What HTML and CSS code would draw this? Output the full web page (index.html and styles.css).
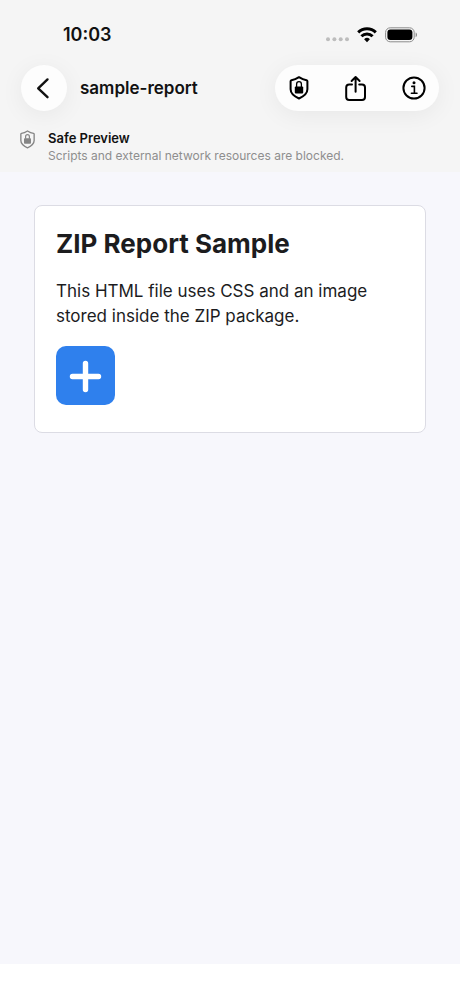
FILE: index.html
```html
<!DOCTYPE html>
<html lang="en">
<head>
  <meta charset="UTF-8" />
  <meta name="viewport" content="width=device-width, initial-scale=1" />
  <title>sample-report</title>
  <link rel="stylesheet" href="styles.css">
</head>
<body>

  <header class="top">
    <div class="status-bar">
      <span class="time">10:03</span>
      <div class="status-icons">
        <svg class="dots" width="24" height="6" viewBox="0 0 24 6" fill="#bdbdbd">
          <circle cx="3" cy="2.2" r="2" /><circle cx="9.4" cy="2.2" r="2" /><circle cx="15.7" cy="2.2" r="2" /><circle cx="22" cy="2.2" r="2" />
        </svg>
        <svg width="20" height="16" viewBox="0 0 20 16" fill="none" stroke="#000" stroke-width="3">
          <path d="M1.2 5.4a12.6 12.6 0 0 1 17.6 0" />
          <path d="M4.4 9.2a8 8 0 0 1 11.2 0" />
          <path d="M10 15.2l-2.9-2.9a4.1 4.1 0 0 1 5.8 0z" fill="#000" stroke="none" />
        </svg>
        <svg width="33" height="16" viewBox="0 0 33 16">
          <rect x="0.6" y="0.8" width="28.6" height="14" rx="4.6" fill="none" stroke="#8c8c8c" />
          <rect x="2.4" y="2.6" width="25" height="10.4" rx="3" />
          <path d="M30.6 5.6v4.6c1.9-.7 1.9-3.9 0-4.6z" fill="#8c8c8c" />
        </svg>
      </div>
    </div>

    <nav class="toolbar">
      <button class="back" aria-label="Back">
        <svg width="24" height="24" viewBox="0 0 24 24" fill="none" stroke="#111" stroke-width="2.4" stroke-linecap="round" stroke-linejoin="round">
          <path d="M15.5 3.4L6.2 12.4l9.3 8.8" />
        </svg>
      </button>
      <span class="doc-name">sample-report</span>
      <div class="actions">
        <button aria-label="Safe preview">
          <svg width="24" height="26" viewBox="0 0 24 26">
            <path d="M12 2.2c2.500 1.600 5 2.700 7.600 3.100.5.1.8.4.8.9v8.100c0 4.400-4.200 7.300-8.400 9.200-4.200-1.900-8.400-4.800-8.400-9.200V6.200c0-.5.3-.8.8-.9C7 4.900 9.500 3.800 12 2.200z" fill="none" stroke="#000" stroke-width="2" stroke-linejoin="round" />
            <rect x="7.800" y="11.400" width="8.400" height="7" rx="1" />
            <path d="M9.600 12V9.300a2.400 2.600 0 0 1 4.800 0V12" fill="none" stroke="#000" stroke-width="1.300" />
          </svg>
        </button>
        <button aria-label="Share">
          <svg width="24" height="28" viewBox="0 0 24 28" fill="none" stroke="#000" stroke-width="2" stroke-linecap="round" stroke-linejoin="round">
            <path d="M8 10.400H5.200a3 3 0 0 0-3 3v9.600a3 3 0 0 0 3 3h12.800a3 3 0 0 0 3-3v-9.600a3 3 0 0 0-3-3H15.200" />
            <path d="M11.600 17.800V3M7.600 7l4-4 4 4" />
          </svg>
        </button>
        <button aria-label="Info">
          <svg width="26" height="26" viewBox="0 0 26 26" fill="none" stroke="#000" stroke-width="2">
            <circle cx="13" cy="13" r="10.600" />
            <circle cx="13" cy="7.800" r="1.500" fill="#000" stroke="none" />
            <path d="M10.800 11.400h2.600v6.600M10.400 18.200h5.600" stroke-width="1.600" stroke-linecap="round" />
          </svg>
        </button>
      </div>
    </nav>

    <div class="banner">
      <svg width="19" height="21" viewBox="0 0 24 26" fill="#858585">
        <path d="M12 2.200c2.500 1.600 5 2.700 7.600 3.100.5.1.8.4.8.9v8.100c0 4.400-4.200 7.300-8.400 9.200-4.200-1.900-8.400-4.800-8.400-9.200V6.200c0-.5.3-.8.8-.9C7 4.900 9.500 3.800 12 2.200z" fill="none" stroke="#858585" stroke-width="1.700" stroke-linejoin="round" />
        <rect x="7.600" y="11.400" width="8.800" height="7" rx="1" />
        <path d="M9.600 12V9.500a2.400 2.600 0 0 1 4.800 0V12" fill="none" stroke="#858585" stroke-width="1.500" />
      </svg>
      <div>
        <div class="banner-title">Safe Preview</div>
        <div class="banner-text">Scripts and external network resources are blocked.</div>
      </div>
    </div>
  </header>

  <main>
    <section class="card">
      <h1>ZIP Report Sample</h1>
      <p>This HTML file uses CSS and an image stored inside the ZIP package.</p>
      <svg class="picture" viewBox="0 0 59 59" role="img" aria-label="Plus">
        <rect width="59" height="59" rx="10" fill="#2f80ed" />
        <path d="M16.500 30.500h26M29.500 17.500v26" stroke="#fff" stroke-width="5.400" stroke-linecap="round" />
      </svg>
    </section>
  </main>

  <footer></footer>

</body>
</html>
```
FILE: styles.css
```css
* {
  box-sizing: border-box;
}
body {
  margin: 0;
  min-height: 100vh;
  display: flex;
  flex-direction: column;
  font-family: Inter, sans-serif;
  background-color: #fff;
  color: #1c1c1e;
}
.top {
  background-color: #f5f5f5;
  color: #111;
  padding-bottom: 8px;
}
.status-bar {
  display: flex;
  justify-content: space-between;
  align-items: center;
  height: 65px;
  padding: 4px 42px 0 63px;
}
.time {
  font-size: 18px;
  font-weight: 600;
}
.status-icons {
  display: flex;
  align-items: center;
  gap: 8px;
}
.dots {
  margin-top: 10px;
}
.toolbar {
  display: flex;
  align-items: center;
  padding: 0 21px;
}
button {
  display: flex;
  align-items: center;
  justify-content: center;
  border: 0;
  padding: 0;
  background: none;
}
.back {
  width: 46px;
  height: 46px;
  border-radius: 50%;
  background-color: #fdfdfd;
  box-shadow: 0 4px 24px rgba(0, 0, 0, 0.06);
}
.doc-name {
  margin-left: 13px;
  font-size: 17px;
  font-weight: 600;
}
.actions {
  display: flex;
  align-items: center;
  justify-content: space-between;
  width: 164px;
  height: 46px;
  margin-left: auto;
  padding: 0 12px;
  border-radius: 23px;
  background-color: #fdfdfd;
  box-shadow: 0 4px 24px rgba(0, 0, 0, 0.06);
}
.banner {
  display: flex;
  gap: 11px;
  padding: 18px 18px 0;
}
.banner-title {
  font-size: 13px;
  line-height: 18px;
  font-weight: 600;
}
.banner-text {
  font-size: 12px;
  line-height: 17px;
  color: #8e8e8e;
}
main {
  flex: 1;
  padding: 33px 34px;
  background-color: #f7f7fc;
}
.card {
  padding: 21px 21px 27px;
  border: 1px solid #dcdce4;
  border-radius: 8px;
  background-color: #fff;
}
h1 {
  margin: 0 0 18px;
  font-size: 26px;
  line-height: 34px;
  font-weight: 700;
}
p {
  margin: 0 0 17px;
  font-size: 17px;
  line-height: 25px;
}
.picture {
  display: block;
  width: 59px;
  height: 59px;
}
footer {
  height: 35px;
}
```
